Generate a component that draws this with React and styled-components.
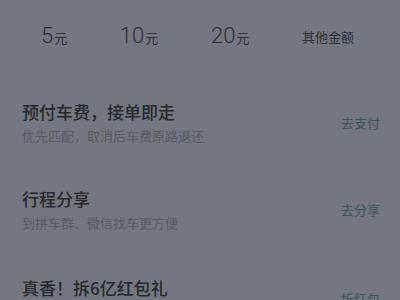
import styled, { createGlobalStyle } from "styled-components";

const GlobalStyle = createGlobalStyle`
  html, body {
    margin: 0;
    padding: 0;
    background: #74777f;
  }
  body {
    font-family: "Noto Sans CJK SC", "Noto Sans", sans-serif;
  }
`;

const Page = styled.div`
  width: 400px;
  height: 300px;
  overflow: hidden;
  background: #74777f;
`;

const AmountBar = styled.div`
  height: 78px;
  display: flex;
  align-items: center;
  justify-content: space-between;
  padding: 0 46px 6px 41px;
  box-sizing: border-box;
`;

const Amount = styled.div`
  display: flex;
  align-items: baseline;
  color: #2c2e33;
`;

const Num = styled.span`
  font-family: "Roboto", "Noto Sans", sans-serif;
  font-weight: 300;
  font-size: 22px;
  line-height: 1;
`;

const Unit = styled.span`
  font-size: 13px;
  margin-left: 1px;
`;

const Other = styled.span`
  font-size: 13px;
  color: #2c2e33;
`;

const Row = styled.div`
  height: 88px;
  flex-shrink: 0;
  display: flex;
  align-items: center;
  justify-content: space-between;
  padding: 0 20px 0 22px;
  border-bottom: ${(p) => (p.$line ? "1px solid #72757c" : "none")};
  box-sizing: border-box;
`;

const Info = styled.div`
  display: flex;
  flex-direction: column;
  gap: 3px;
`;

const Title = styled.div`
  font-size: 17px;
  font-weight: 500;
  line-height: 24px;
  color: #26282c;
`;

const Sub = styled.div`
  font-size: 13px;
  line-height: 18px;
  min-height: 18px;
  color: #585b61;
`;

const Action = styled.div`
  font-size: 13px;
  color: #3d5356;
`;

// 마지막 줄은 화면 아래로 잘려서 부제목이 보이지 않음
const rows = [
  { title: "预付车费，接单即走", sub: "优先匹配，取消后车费原路退还", action: "去支付" },
  { title: "行程分享", sub: "到拼车群、微信找车更方便", action: "去分享", line: true },
  { title: "真香！拆6亿红包礼", sub: "", action: "拆红包" },
];

export default function App() {
  return (
    <Page>
      <GlobalStyle />
      <AmountBar>
        {["5", "10", "20"].map((n) => (
          <Amount key={n}>
            <Num>{n}</Num>
            <Unit>元</Unit>
          </Amount>
        ))}
        <Other>其他金额</Other>
      </AmountBar>
      {rows.map((r) => (
        <Row key={r.title} $line={r.line}>
          <Info>
            <Title>{r.title}</Title>
            <Sub>{r.sub}</Sub>
          </Info>
          <Action>{r.action}</Action>
        </Row>
      ))}
    </Page>
  );
}
